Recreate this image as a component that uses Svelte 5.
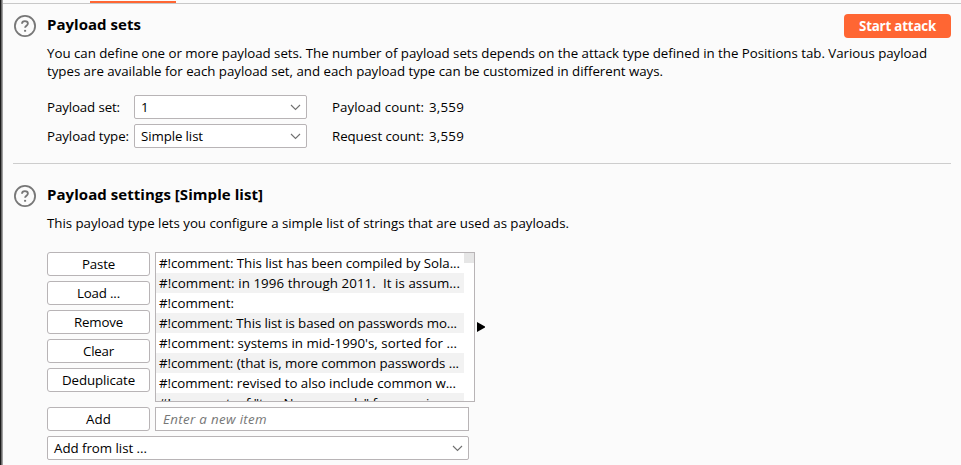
<script>
  const description = [
    { text: 'You can define one or more payload sets. The number of payload sets depends on the attack type defined in the Positions tab. Various payload', width: 880 },
    { text: 'types are available for each payload set, and each payload type can be customized in different ways.', width: 616 }
  ];

  const fields = [
    { label: 'Payload set:', labelWidth: 73, value: '1', valueWidth: 8, stat: 'Payload count:', statWidth: 92 },
    { label: 'Payload type:', labelWidth: 82, value: 'Simple list', valueWidth: 62, stat: 'Request count:', statWidth: 92 }
  ];

  const actions = [
    { text: 'Paste', width: 33 },
    { text: 'Load ...', width: 43 },
    { text: 'Remove', width: 49 },
    { text: 'Clear', width: 31 },
    { text: 'Deduplicate', width: 73 }
  ];

  const items = [
    { text: '#!comment: This list has been compiled by Sola...', width: 301 },
    { text: '#!comment: in 1996 through 2011.  It is assum...', width: 301 },
    { text: '#!comment:', width: 75 },
    { text: '#!comment: This list is based on passwords mo...', width: 298 },
    { text: "#!comment: systems in mid-1990's, sorted for ...", width: 298 },
    { text: '#!comment: (that is, more common passwords ...', width: 300 },
    { text: '#!comment: revised to also include common w...', width: 297 },
    { text: '#!comment: of "top N passwords" from major ...', width: 298 }
  ];

  // Tracks the text so that it fills the given width.
  function fit(node, width) {
    const natural = node.getBoundingClientRect().width;
    const spacing = (width - natural) / node.textContent.length;
    node.style.letterSpacing = `${spacing}px`;
  }
</script>

{#snippet help()}
  <svg class="help" width="24" height="24" viewBox="0 0 24 24">
    <circle cx="12" cy="12" r="10.1" />
    <path d="M9 9.7C9 8.2 10.2 7.2 11.9 7.2s3 1 3 2.4c0 2.1-2.8 2.2-2.8 4.2" />
    <rect x="11.1" y="15.9" width="2" height="1.8" />
  </svg>
{/snippet}

{#snippet chevron()}
  <svg class="chevron" width="11" height="7" viewBox="0 0 11 7"><path d="M1 1l4.5 4.5L10 1" /></svg>
{/snippet}

<div class="window">
  <div class="edge"></div>
  <main>
    <div class="tabs"><div class="active"></div></div>

    <section class="sets">
      {@render help()}
      <div class="body">
        <header>
          <h2><span use:fit={94}>Payload sets</span></h2>
          <button class="attack"><span use:fit={77}>Start attack</span></button>
        </header>
        <div class="description">
          {#each description as line}
            <p><span use:fit={line.width}>{line.text}</span></p>
          {/each}
        </div>
        <div class="fields">
          {#each fields as field}
            <div class="field">
              <div class="label"><span use:fit={field.labelWidth}>{field.label}</span></div>
              <div class="select">
                <span use:fit={field.valueWidth}>{field.value}</span>
                {@render chevron()}
              </div>
              <div class="stat"><span use:fit={field.statWidth}>{field.stat}</span></div>
              <div><span use:fit={35}>3,559</span></div>
            </div>
          {/each}
        </div>
      </div>
    </section>

    <hr />

    <section class="settings">
      {@render help()}
      <div class="body">
        <h2><span use:fit={216}>Payload settings [Simple list]</span></h2>
        <p class="intro"><span use:fit={522}>This payload type lets you configure a simple list of strings that are used as payloads.</span></p>
        <div class="editor">
          <div class="actions">
            {#each actions as action}
              <button><span use:fit={action.width}>{action.text}</span></button>
            {/each}
          </div>
          <div class="list">
            <div class="items">
              {#each items as item}
                <div class="item"><span use:fit={item.width}>{item.text}</span></div>
              {/each}
            </div>
            <div class="track"><div class="thumb"></div></div>
          </div>
          <svg class="arrow" width="8" height="10" viewBox="0 0 8 10"><path d="M0 0L8 4.5V5.5L0 10z" /></svg>
        </div>
        <div class="add">
          <button><span use:fit={25}>Add</span></button>
          <div class="input"><span use:fit={104}>Enter a new item</span></div>
        </div>
        <div class="select wide">
          <span use:fit={93}>Add from list ...</span>
          {@render chevron()}
        </div>
      </div>
    </section>
  </main>
</div>

<style>
  .window {
    display: flex;
    width: 961px;
    height: 465px;
    overflow: hidden;
    background: #fbfbfb;
    color: #000;
    font: 13.3px/18px 'Open Sans', 'Noto Sans', sans-serif;
  }
  .window * { box-sizing: border-box; }
  span { white-space: pre; flex: none; }
  .edge {
    width: 3px;
    flex: none;
    background: linear-gradient(to right, #1c1c1c 0 1px, #6b6b6b 1px 2px, #a0a0a0 2px 3px);
  }
  main { flex: 1; }
  .tabs { height: 4px; border-bottom: 1px solid #c8c8c8; padding: 1px 0 0 87px; }
  .active { width: 86px; height: 2px; background: #ff6633; }
  section { display: flex; padding: 0 10px; }
  .help { flex: none; margin-right: 10px; }
  .help circle { fill: none; stroke: #777; stroke-width: 1.8; }
  .help path { fill: none; stroke: #777; stroke-width: 1.8; }
  .help rect { fill: #777; }
  .sets .help { margin-top: 10px; }
  .settings .help { margin-top: 20px; }
  .body { flex: 1; }
  header { display: flex; justify-content: space-between; padding-top: 10px; height: 34px; }
  h2 { margin: 0; font-size: 15px; line-height: 22px; font-weight: 700; }
  header h2 { margin-top: -1px; }
  p { margin: 0; height: 18px; }
  button {
    display: flex;
    justify-content: center;
    align-items: center;
    width: 103px;
    height: 24px;
    padding: 0 0 1px;
    border: 1px solid #b8b4b6;
    border-radius: 3px;
    background: #fff;
    color: #000;
    font: inherit;
  }
  .attack { width: 107px; border: 0; border-radius: 4px; background: #ff6633; color: #fff; font-weight: 700; padding: 0; }
  .description { padding-top: 6px; }
  .fields { display: flex; flex-direction: column; gap: 5px; padding-top: 15px; }
  .field { display: flex; align-items: center; height: 24px; }
  .label { width: 87px; }
  .select {
    display: flex;
    justify-content: space-between;
    align-items: center;
    width: 173px;
    height: 24px;
    padding: 0 5px 0 6px;
    border: 1px solid #b8b4b6;
    border-radius: 2px;
    background: #fff;
  }
  .chevron path { fill: none; stroke: #707070; stroke-width: 1.1; }
  .stat { width: 97px; margin-left: 25px; }
  hr { height: 1px; margin: 15px 10px 0; border: 0; background: #cdcdcd; }
  .settings h2 { padding-top: 19px; }
  .intro { margin-top: 9px; }
  .editor { display: flex; margin-top: 20px; height: 150px; }
  .actions { display: flex; flex-direction: column; gap: 5px; width: 108px; }
  .list { display: flex; width: 320px; height: 150px; overflow: hidden; border: 1px solid #b8b4b6; background: #fff; }
  .items { width: 308px; }
  .item { height: 20px; line-height: 20px; padding-left: 3px; overflow: hidden; }
  .item:nth-child(even) { background: #f2f2f2; }
  .track { width: 10px; }
  .thumb { height: 10px; background: #e6e6e6; }
  .arrow { margin: 70px 0 0 2px; }
  .add { display: flex; gap: 5px; margin-top: 5px; }
  .input { width: 314px; height: 24px; padding-left: 7px; line-height: 22px; border: 1px solid #b8b4b6; background: #fff; color: #777; font-style: italic; }
  .wide { width: 422px; margin-top: 5px; }
</style>
